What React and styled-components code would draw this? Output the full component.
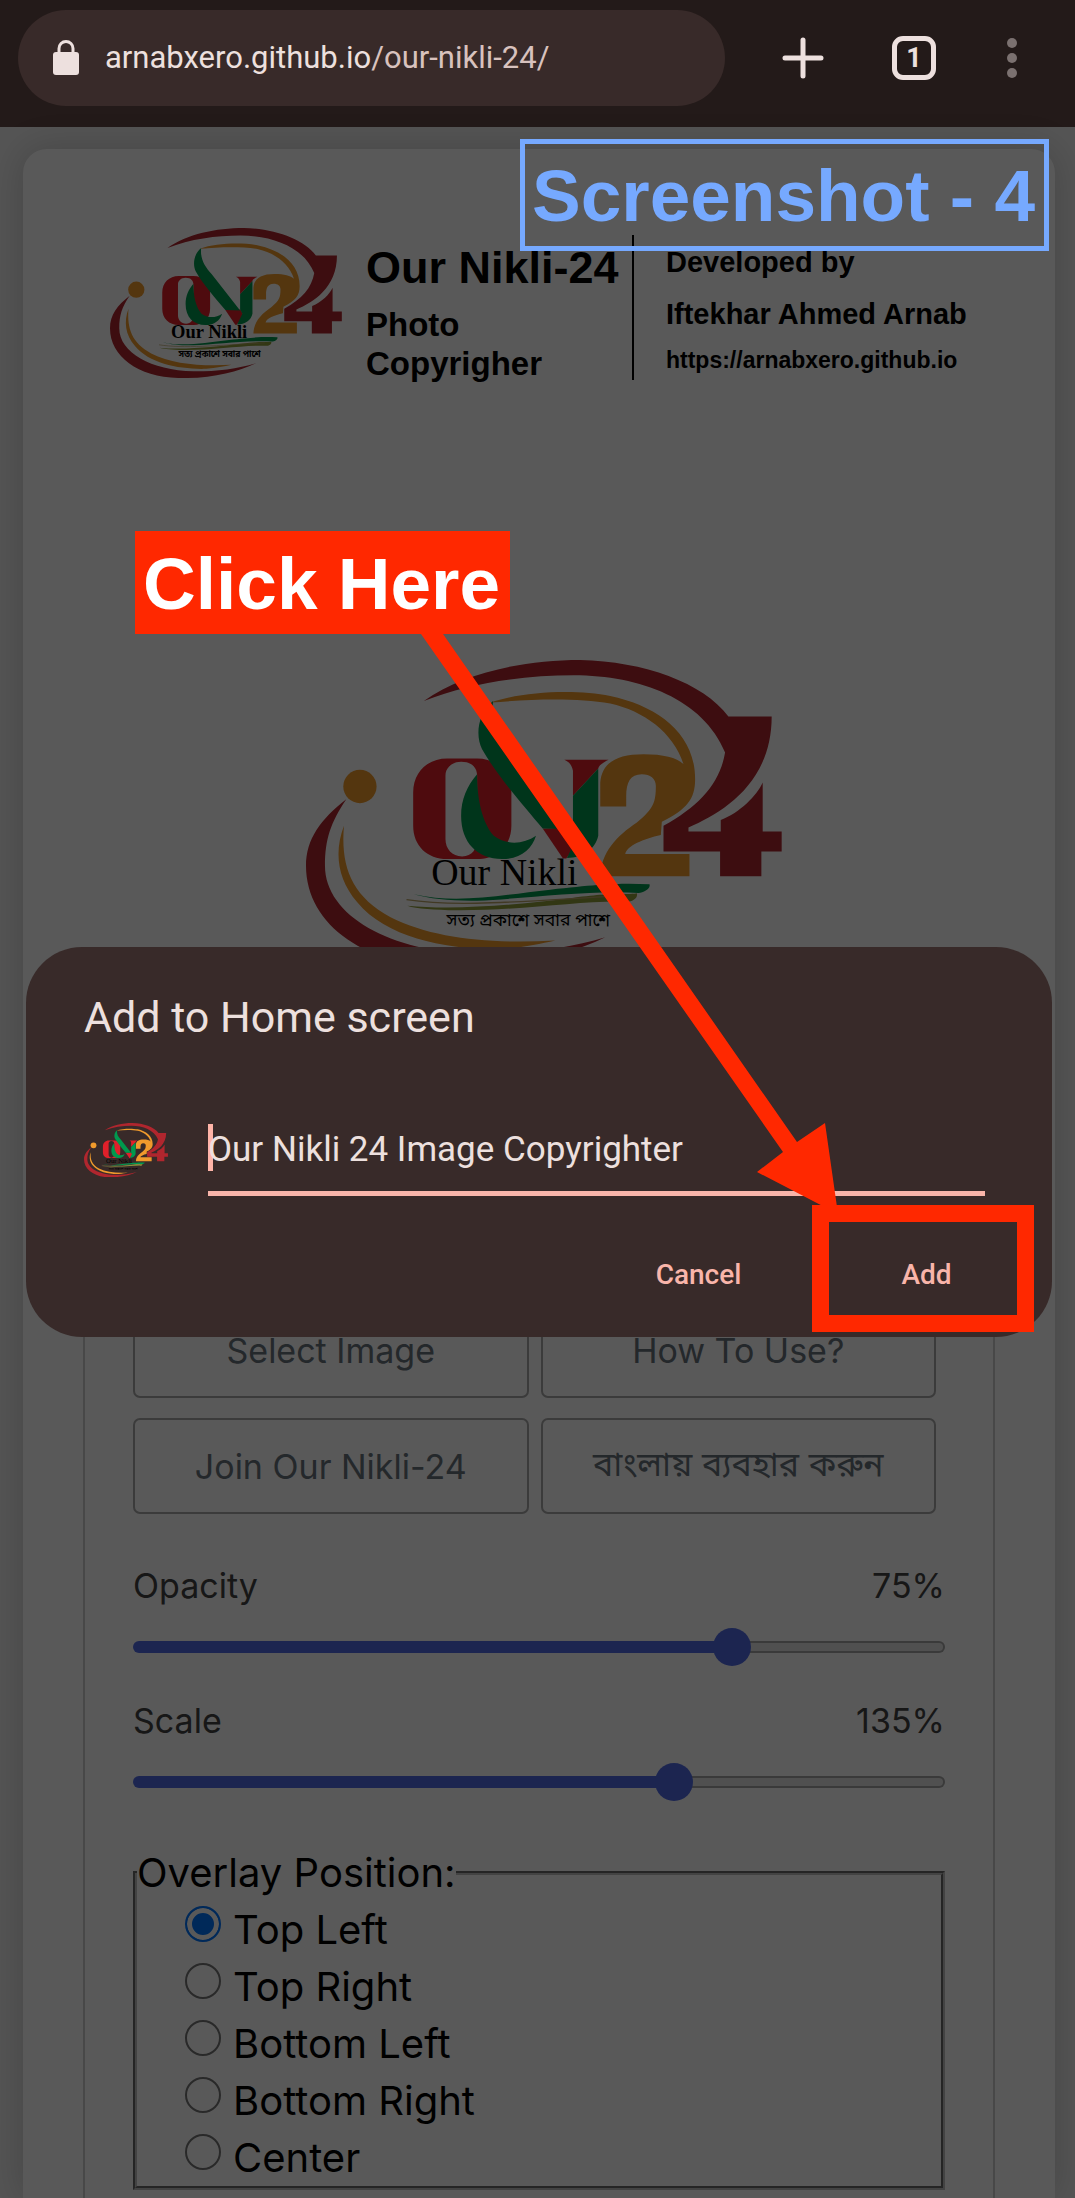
import React, { useState } from "react";
import styled, { createGlobalStyle } from "styled-components";

const ui = `Inter, "Noto Sans", "Noto Sans Bengali", sans-serif`;
const sans = `"Liberation Sans", Arial, sans-serif`;
const roboto = `Roboto, "Open Sans", sans-serif`;

const GlobalStyle = createGlobalStyle`
  *, *::before, *::after { box-sizing: border-box; }
  body { margin: 0; background: #545454; }
  button, input { font: inherit; color: inherit; }
`;

const Shell = styled.div`
  position: relative;
  display: flex;
  flex-direction: column;
  min-height: 100vh;
  overflow: hidden;
`;

/* ---- browser bar ---- */

const BrowserBar = styled.header`
  display: flex;
  align-items: center;
  height: 127px;
  padding: 0 55px 11px 18px;
  background: #231a19;
  font-family: ${roboto};
`;

const AddressBar = styled.button`
  display: flex;
  align-items: center;
  flex: 1;
  gap: 26px;
  height: 96px;
  padding: 0 35px;
  border: 0;
  border-radius: 48px;
  background: #382a29;
  color: #ede0de;
  font-size: 31px;
  line-height: 40px;
`;

const UrlPath = styled.span`
  color: #d8c2be;
`;

const BarActions = styled.div`
  display: flex;
  align-items: center;
  gap: 68px;
  padding-left: 57px;
`;

const IconButton = styled.button`
  display: flex;
  padding: 0;
  border: 0;
  background: none;
  color: #ede0de;
`;

const TabsButton = styled(IconButton)`
  align-items: center;
  justify-content: center;
  width: 44px;
  height: 44px;
  border: 5px solid #ede0de;
  border-radius: 11px;
  font-size: 27px;
  font-weight: 700;
`;

/* ---- page ---- */

const Page = styled.main`
  position: relative;
  display: flex;
  flex-direction: column;
  flex: 1;
  padding: 22px 20px 0 23px;
  background: #f1f1f1;
`;

const Card = styled.div`
  display: flex;
  flex-direction: column;
  flex: 1;
  padding: 79px 60px 0;
  border-radius: 24px 24px 0 0;
  background: #fff;
  box-shadow: 0 0 36px rgba(0, 0, 0, 0.18);
`;

const Masthead = styled.div`
  display: grid;
  grid-template-columns: 232px 268px 1fr;
  padding-left: 27px;
  column-gap: 24px;
  color: #000;
  font-family: ${sans};
  font-weight: 700;
`;

const Brand = styled.div`
  display: flex;
  flex-direction: column;
  height: 145px;
  margin-top: 7px;
  border-right: 2px solid #000;
`;

const BrandName = styled.h1`
  margin: 0 0 5px;
  font-size: 45px;
  line-height: 65px;
  white-space: nowrap;
`;

const BrandTagline = styled.h2`
  width: 200px;
  margin: 0;
  font-size: 33px;
  line-height: 39px;
`;

const Credits = styled.div`
  display: flex;
  flex-direction: column;
  padding: 8px 0 0 8px;
  font-size: 29px;
  line-height: 52px;
`;

const CreditLink = styled.a`
  color: inherit;
  font-size: 23px;
  line-height: 40px;
  text-decoration: none;
`;

const Preview = styled.div`
  display: flex;
  justify-content: center;
  padding: 280px 0 301px 9px;
`;

const Panel = styled.section`
  flex: 1;
  padding: 31px 48px 7px;
  border: 2px solid #cdcdcd;
  border-bottom: 0;
  font-family: ${ui};
`;

const ButtonGrid = styled.div`
  display: grid;
  grid-template-columns: 1fr 1fr;
  gap: 20px 12px;
  padding-right: 9px;
`;

const OutlineButton = styled.button`
  height: 96px;
  padding: 0;
  border: 2px solid #a9a9a9;
  border-radius: 7px;
  background: #fff;
  color: #68727c;
  font-size: 34px;
`;

const SliderGroup = styled.div`
  display: flex;
  flex-direction: column;
  gap: 31px;
  padding: 48px 0 43px;
`;

const SliderField = styled.div`
  display: grid;
  grid-template-columns: 1fr auto;
  row-gap: 18px;
  color: #444;
  font-size: 34px;
  line-height: 48px;
`;

const Range = styled.input`
  grid-column: 1 / -1;
  width: 100%;
  height: 38px;
  margin: 0;
  appearance: none;
  background: none;

  &::-webkit-slider-runnable-track {
    height: 12px;
    border: 2px solid transparent;
    border-radius: 6px;
    background:
      linear-gradient(#506be6, #506be6) 0 / var(--fill) 100% no-repeat border-box,
      linear-gradient(#e6e6e6, #e6e6e6) padding-box,
      linear-gradient(#a6a6a6, #a6a6a6) border-box;
  }

  &::-webkit-slider-thumb {
    width: 38px;
    height: 38px;
    margin-top: -15px;
    appearance: none;
    border-radius: 50%;
    background: #506be6;
  }
`;

const Positions = styled.fieldset`
  min-width: 0;
  margin: 0;
  padding: 0;
  border: 4px groove #c0c0c0;
  color: #000;
  font-size: 40px;
  line-height: 57px;
`;

const Legend = styled.legend`
  padding: 0;
`;

const RadioRow = styled.label`
  display: flex;
  gap: 12px;
  padding-left: 48px;
`;

const Radio = styled.input`
  width: 36px;
  height: 36px;
  margin: 5px 0 0;
  appearance: none;
  border: 2px solid #767676;
  border-radius: 50%;
  background: #fff;

  &:checked {
    border-color: #0075ff;
    background: #0075ff;
    box-shadow: inset 0 0 0 5px #fff;
  }
`;

/* ---- install dialog ---- */

const Scrim = styled.div`
  position: absolute;
  inset: 0;
  background: rgba(0, 0, 0, 0.65);
`;

const Dialog = styled.form`
  position: absolute;
  top: 820px;
  left: 26px;
  right: 23px;
  padding: 44px 67px 33px 58px;
  border-radius: 56px;
  background: #382a29;
  color: #ede0de;
  font-family: ${roboto};
`;

const DialogTitle = styled.h2`
  margin: 0 0 80px;
  font-size: 43px;
  font-weight: 400;
  line-height: 52px;
`;

const NameRow = styled.div`
  display: flex;
  align-items: flex-start;
  gap: 40px;
`;

const NameField = styled.div`
  position: relative;
  flex: 1;
`;

const Caret = styled.span`
  position: absolute;
  top: 1px;
  left: 0;
  width: 5px;
  height: 47px;
  background: #ffb4a8;
`;

const NameInput = styled.input`
  position: relative;
  display: block;
  width: 100%;
  height: 73px;
  padding: 3px 0 18px;
  border: 0;
  border-bottom: 5px solid #f9b5aa;
  outline: 0;
  background: none;
  font-size: 35px;
  line-height: 47px;
`;

const DialogActions = styled.div`
  display: flex;
  justify-content: flex-end;
  gap: 111px;
  padding-top: 48px;
`;

const TextButton = styled.button`
  width: 117px;
  height: 60px;
  padding: 0;
  border: 0;
  background: none;
  color: #f9b5aa;
  font-size: 28px;
  font-weight: 500;
`;

/* ---- tutorial annotations ---- */

const Note = styled.div`
  position: absolute;
  font-family: ${sans};
  font-size: 73px;
  font-weight: 700;
  white-space: nowrap;
`;

const StepNote = styled(Note)`
  top: 139px;
  right: 26px;
  padding: 2px 9px 0 7px;
  border: 5px solid #76a9ff;
  color: #76a9ff;
  line-height: 100px;
`;

const ClickNote = styled(Note)`
  top: 531px;
  left: 135px;
  padding: 2px 10px 0 8px;
  background: #ff2800;
  color: #fff;
  line-height: 101px;
`;

const Highlight = styled.div`
  position: absolute;
  top: 1205px;
  right: 41px;
  width: 222px;
  height: 127px;
  border: 17px solid #ff2800;
`;

const Arrow = styled.svg`
  position: absolute;
  top: 634px;
  left: 421px;
`;

function Logo({ width }) {
  return (
    <svg width={width} viewBox="46 62 1430 926" role="img" aria-label="Our Nikli 24">
      <path
        fill="#f09a2c"
        d="M600 190C700 155 860 150 960 170C1100 200 1215 280 1215 420C1215 480 1190 510 1115 548L1112 588C1060 600 1010 620 1005 645H1198V712H930C932 640 980 590 1040 550C1090 510 1097 490 1097 440C1097 418 1080 405 1055 405C1020 405 1008 430 1008 470V502H930V430C935 370 980 345 1060 345C1120 345 1160 355 1180 375C1150 280 1060 215 960 193C860 175 720 180 600 190Z"
      />
      <path
        fill="#b0262e"
        d="M400 185C520 100 700 62 870 62C1060 66 1240 130 1315 232H1445C1445 430 1300 520 1195 565V577H1292V543C1350 520 1400 470 1418 430V577H1475V637H1414V712H1290V637H1120V560C1230 500 1290 430 1305 340C1240 180 1050 108 850 108C700 108 540 130 400 185Z"
      />
      <circle cx="208" cy="442" r="50" fill="#f09a2c" />
      <path
        fill="#b0262e"
        d="M167 480C90 540 46 600 46 680C46 860 230 987 490 987C680 987 830 950 945 895C830 930 700 946 560 945C300 940 103 830 103 680C103 600 120 550 167 480Z"
      />
      <path
        fill="#f09a2c"
        d="M160 560C130 640 140 720 200 790C290 900 480 935 640 930C700 925 750 915 795 905C600 915 430 900 300 835C180 770 150 680 160 560Z"
      />
      <path
        fill="#e0202a"
        fillRule="evenodd"
        d="M470 358H560C620 358 663 400 663 460V560C663 620 620 660 560 660H470C410 660 368 620 368 560V460C368 400 410 358 470 358ZM512 368C485 368 465 385 465 410V600C465 630 485 652 515 652C545 652 560 630 560 600V410C560 385 545 368 512 368Z"
      />
      <path
        fill="#00994e"
        d="M560 405C530 440 512 480 512 530C512 610 560 660 635 660C690 660 725 630 737 590C700 615 650 620 610 590C575 550 560 480 560 405Z"
      />
      <path fill="#e0202a" d="M757 568L850 565L870 600L828 658H818Z" />
      <path fill="#00994e" d="M608 185C560 225 555 290 575 330C620 410 700 500 757 568L848 570L672 345C630 300 600 250 608 185Z" />
      <path fill="#e0202a" d="M822 362H955C935 372 925 380 924 388L848 470V395C845 380 840 370 822 362Z" />
      <path fill="#00994e" d="M924 388V590C915 630 880 655 830 657L862 590L848 565V470Z" />
      <text x="422" y="738" fontFamily='"Liberation Serif", serif' fontSize="114" fill="#000">
        Our Nikli
      </text>
      <path fill="#00994e" d="M370 766C500 795 620 770 780 752S1000 732 1078 736C1082 750 1060 760 1045 762C900 752 700 780 560 785C480 786 420 780 370 766Z" />
      <path fill="#8f9d3a" d="M350 800C500 815 700 795 850 776S1000 770 1040 763C1045 780 1020 790 1010 788C880 783 700 815 500 814C430 812 380 810 350 800Z" />
      <path fill="none" stroke="#b9a468" strokeWidth="4" d="M348 782C500 806 700 786 1000 770" />
      <text x="468" y="860" fontFamily='"Noto Sans Bengali", "Noto Sans", sans-serif' fontSize="53" fill="#000">
        সত্য প্রকাশে সবার পাশে
      </text>
    </svg>
  );
}

function Slider({ id, label, max, initial }) {
  const [value, setValue] = useState(initial);
  return (
    <SliderField>
      <label htmlFor={id}>{label}</label>
      <output htmlFor={id}>{value}%</output>
      <Range
        id={id}
        type="range"
        min="0"
        max={max}
        value={value}
        onChange={(e) => setValue(Number(e.target.value))}
        style={{ "--fill": `${(value / max) * 100}%` }}
      />
    </SliderField>
  );
}

const positions = ["Top Left", "Top Right", "Bottom Left", "Bottom Right", "Center"];
const actions = ["Select Image", "How To Use?", "Join Our Nikli-24", "বাংলায় ব্যবহার করুন"];

export default function App() {
  return (
    <>
      <GlobalStyle />
      <Shell>
        <BrowserBar>
          <AddressBar type="button">
            <svg width="26" height="36" viewBox="0 0 26 36" aria-hidden="true">
              <rect y="12" width="26" height="23" rx="3" fill="#ede0de" />
              <path d="M6 13V8.500a7 7 0 0 1 14 0V13" fill="none" stroke="#ede0de" strokeWidth="3" />
            </svg>
            <span>
              arnabxero.github.io<UrlPath>/our-nikli-24/</UrlPath>
            </span>
          </AddressBar>
          <BarActions>
            <IconButton type="button" aria-label="New tab">
              <svg width="42" height="42" viewBox="0 0 42 42">
                <path d="M21 3v36M3 21h36" stroke="currentColor" strokeWidth="5" strokeLinecap="round" />
              </svg>
            </IconButton>
            <TabsButton type="button">1</TabsButton>
            <IconButton type="button" aria-label="Menu">
              <svg width="16" height="42" viewBox="0 0 16 42" fill="#7b7170">
                <circle cx="8" cy="6" r="5" />
                <circle cx="8" cy="21" r="5" />
                <circle cx="8" cy="36" r="5" />
              </svg>
            </IconButton>
          </BarActions>
        </BrowserBar>

        <Page>
          <Card>
            <Masthead>
              <Logo width={232} />
              <Brand>
                <BrandName>Our Nikli-24</BrandName>
                <BrandTagline>Photo Copyrigher</BrandTagline>
              </Brand>
              <Credits>
                <span>Developed by</span>
                <span>Iftekhar Ahmed Arnab</span>
                <CreditLink href="https://arnabxero.github.io">https://arnabxero.github.io</CreditLink>
              </Credits>
            </Masthead>
            <Preview>
              <Logo width={476} />
            </Preview>
            <Panel>
              <ButtonGrid>
                {actions.map((text) => (
                  <OutlineButton key={text} type="button">
                    {text}
                  </OutlineButton>
                ))}
              </ButtonGrid>
              <SliderGroup>
                <Slider id="opacity" label="Opacity" max={100} initial={75} />
                <Slider id="scale" label="Scale" max={200} initial={135} />
              </SliderGroup>
              <Positions>
                <Legend>Overlay Position:</Legend>
                {positions.map((name, i) => (
                  <RadioRow key={name}>
                    <Radio type="radio" name="position" defaultChecked={i === 0} />
                    {name}
                  </RadioRow>
                ))}
              </Positions>
            </Panel>
          </Card>

          <Scrim />
          <Dialog role="dialog" aria-labelledby="dialog-title" onSubmit={(e) => e.preventDefault()}>
            <DialogTitle id="dialog-title">Add to Home screen</DialogTitle>
            <NameRow>
              <Logo width={84} />
              <NameField>
                <Caret />
                <NameInput aria-label="Shortcut name" defaultValue="Our Nikli 24 Image Copyrighter" />
              </NameField>
            </NameRow>
            <DialogActions>
              <TextButton type="button">Cancel</TextButton>
              <TextButton type="submit">Add</TextButton>
            </DialogActions>
          </Dialog>
        </Page>

        <StepNote>Screenshot - 4</StepNote>
        <Arrow width="418" height="581" viewBox="421 634 418 581" fill="#ff2800" aria-hidden="true">
          <path d="M421 634H443L797 1142L825 1123L838 1214L757 1172L783 1152Z" />
        </Arrow>
        <ClickNote>Click Here</ClickNote>
        <Highlight />
      </Shell>
    </>
  );
}
